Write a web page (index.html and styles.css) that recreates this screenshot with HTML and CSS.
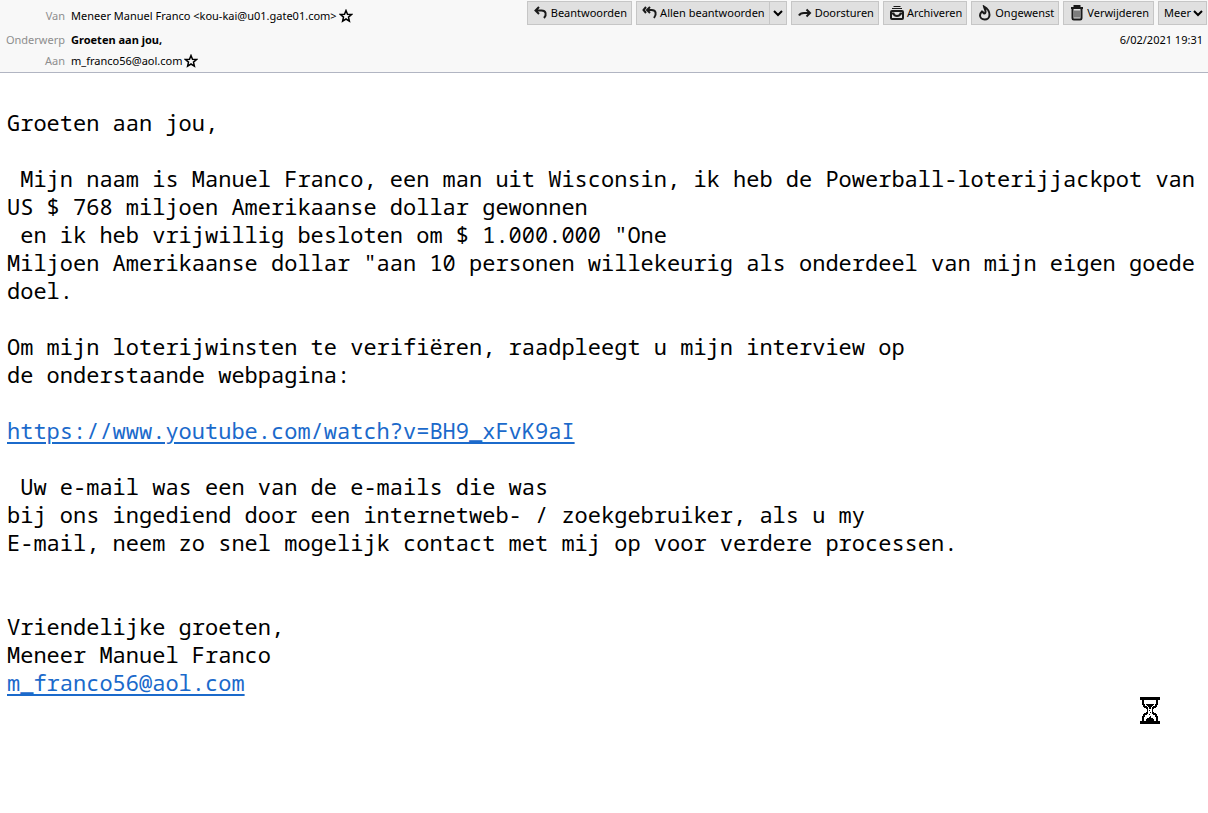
FILE: index.html
```
<!DOCTYPE html>
<html lang="nl">
<head>
    <meta charset="UTF-8">
    <meta name="viewport" content="width=device-width, initial-scale=1.0">
    <title>Groeten aan jou,</title>
    <link rel="stylesheet" href="styles.css">
</head>
<body>
    <header class="message-header">
        <dl class="fields">
            <dt>Van</dt>
            <dd>
                <span>Meneer Manuel Franco &lt;kou-kai@u01.gate01.com&gt;</span>
                <button class="star" aria-label="Contact toevoegen">
                    <svg width="14" height="14" viewBox="0 0 14 14"><path d="M7 1.500l1.500 3.700 4 .3-3 2.600.9 4L7 10l-3.400 2.100.9-4-3-2.600 4-.3z"/></svg>
                </button>
            </dd>
            <dt>Onderwerp</dt>
            <dd class="subject">Groeten aan jou,</dd>
            <dt>Aan</dt>
            <dd>
                <span>m_franco56@aol.com</span>
                <button class="star" aria-label="Contact toevoegen">
                    <svg width="14" height="14" viewBox="0 0 14 14"><path d="M7 1.500l1.500 3.700 4 .3-3 2.600.9 4L7 10l-3.400 2.100.9-4-3-2.600 4-.3z"/></svg>
                </button>
            </dd>
        </dl>

        <div class="side">
            <div class="toolbar">
                <button class="tool">
                    <svg width="16" height="16" viewBox="0 0 16 16"><path d="M6 2L2.500 5.500 6 9M3 5.500h5.500c4.500 0 5.500 4 2.500 7.500"/></svg>
                    Beantwoorden
                </button>
                <div class="split">
                    <button class="tool">
                        <svg width="16" height="16" viewBox="0 0 16 16"><path d="M4 2L1.500 5 4 8M8 2L5 5l3 3M5.500 5H9.500c4.500 0 5.500 4 2.500 8"/></svg>
                        Allen beantwoorden
                    </button>
                    <button class="tool drop" aria-label="Meer antwoordopties">
                        <svg width="10" height="10" viewBox="0 0 10 10"><path d="M1 3l4 4 4-4"/></svg>
                    </button>
                </div>
                <button class="tool">
                    <svg width="16" height="16" viewBox="0 0 16 16"><path d="M2 10.500c1-2 2.500-2.500 5-2.500h6M9.500 4.500L13 8l-3.500 3.500"/></svg>
                    Doorsturen
                </button>
                <button class="tool">
                    <svg width="16" height="16" viewBox="0 0 16 16"><path d="M4.500 1.500h7M3 3.500h10" stroke-width="1"/><path d="M3 6h10a1 1 0 0 1 1 1v6a1 1 0 0 1-1 1H3a1 1 0 0 1-1-1V7a1 1 0 0 1 1-1zM2 8.500h2.500C5 10.300 6.300 11 8 11s3-.7 3.500-2.500H14"/></svg>
                    Archiveren
                </button>
                <button class="tool">
                    <svg width="16" height="16" viewBox="0 0 16 16"><path d="M7 1.500c.5 2.500 1.500 3 1.500 5 0 1.300-.5 2-1.200 2C6.300 8.500 6.200 7 5 6.500 4 7.500 3 8.500 3 10.200c0 2.500 2 4.300 4.700 4.300s4.800-1.900 4.800-4.500c0-3.500-2-6.500-5.500-8.500z"/></svg>
                    Ongewenst
                </button>
                <button class="tool">
                    <svg width="16" height="16" viewBox="0 0 16 16"><path d="M2 3h12M5.500 3V1h5v2M3.500 4v9.200c0 .8.500 1.300 1.300 1.300h6.400c.8 0 1.300-.5 1.300-1.300V4"/><path d="M6 5.500v7M8 5.500v7M10 5.500v7" stroke-width="1"/></svg>
                    Verwijderen
                </button>
                <button class="tool more">
                    Meer
                    <svg width="10" height="10" viewBox="0 0 10 10"><path d="M1 3l4 4 4-4"/></svg>
                </button>
            </div>
            <time class="date" datetime="2021-02-06T19:31">6/02/2021 19:31</time>
        </div>
    </header>

    <main class="message-body">Groeten aan jou,

 Mijn naam is Manuel Franco, een man uit Wisconsin, ik heb de Powerball-loterijjackpot van
US $ 768 miljoen Amerikaanse dollar gewonnen
 en ik heb vrijwillig besloten om $ 1.000.000 "One
Miljoen Amerikaanse dollar "aan 10 personen willekeurig als onderdeel van mijn eigen goede
doel.

Om mijn loterijwinsten te verifiëren, raadpleegt u mijn interview op
de onderstaande webpagina:

<a href="https://www.youtube.com/watch?v=BH9_xFvK9aI">https://www.youtube.com/watch?v=BH9_xFvK9aI</a>

 Uw e-mail was een van de e-mails die was
bij ons ingediend door een internetweb- / zoekgebruiker, als u my
E-mail, neem zo snel mogelijk contact met mij op voor verdere processen.


Vriendelijke groeten,
Meneer Manuel Franco
<a href="mailto:m_franco56@aol.com">m_franco56@aol.com</a></main>

    <!-- wachtcursor -->
    <svg class="hourglass" width="20" height="27" viewBox="0 0 20 27" shape-rendering="crispEdges">
        <path d="M0 0h20v3H0zM0 24h20v3H0zM2 3h2v5H2zM16 3h2v5h-2zM3 7h2v3H3zM15 7h2v3h-2zM4 9h3v2H4zM13 9h3v2h-3zM6 10h2v2H6zM12 10h2v2h-2zM7 12h1v3H7zM12 12h1v3h-1zM6 15h2v2H6zM12 15h2v2h-2zM4 16h3v2H4zM13 16h3v2h-3zM3 17h2v3H3zM15 17h2v3h-2zM2 19h2v5H2zM16 19h2v5h-2z"/>
        <path d="M6 7h8v1H6zM7 8h6v1H7zM8 9h4v1H8zM9 10h2v2H9zM9 13h1v1H9zM10 15h1v1h-1zM9 17h1v1H9zM10 19h1v1h-1zM9 20h2v1H9zM7 21h6v1H7zM6 22h8v2H6z"/>
    </svg>
</body>
</html>
```

FILE: styles.css
```
body {
    margin: 0;
    background: #fff;
    color: #000;
}
button {
    margin: 0;
    font: inherit;
    color: inherit;
    cursor: pointer;
}
svg {
    flex: none;
    fill: none;
    stroke: #1a1a1a;
    stroke-width: 2;
}
.message-header {
    display: flex;
    justify-content: space-between;
    background: #f8f8f8;
    border-bottom: 1px solid #b1b5c2;
    font-family: "Segoe UI", "Noto Sans", sans-serif;
    font-size: 11px;
    line-height: 22px;
    white-space: nowrap;
}
.fields {
    display: grid;
    grid-template-columns: 65px auto;
    grid-template-rows: 27px 24px 21px;
    column-gap: 6px;
    align-items: end;
    margin: 0;
}
.fields dt {
    color: #8e8e8e;
    text-align: right;
}
.fields dd {
    display: flex;
    align-items: center;
    gap: 2px;
    margin: 0;
}
.fields .subject {
    font-weight: bold;
}
.star {
    display: flex;
    padding: 0;
    border: 0;
    background: none;
}
.star svg {
    stroke: #000;
    stroke-width: 1.500;
}
.side {
    display: flex;
    flex-direction: column;
    align-items: flex-end;
    gap: 4px;
}
.toolbar {
    display: flex;
    gap: 4px;
    padding: 1px 1px 0 0;
}
.tool {
    display: flex;
    align-items: center;
    gap: 2px;
    height: 24px;
    padding: 0 4px 0 5px;
    background: #e0e0e0;
    border: 1px solid #c6c6c6;
}
.tool:hover {
    background: #d4d4d4;
}
.split {
    display: flex;
}
.split .drop {
    padding: 0 3px;
    border-left: 0;
}
.split .drop svg,
.more svg {
    stroke: #000;
}
.tool.more {
    padding-right: 3px;
}
.date {
    padding-right: 5px;
}
.message-body {
    padding: 35px 0 24px 7px;
    font-family: Consolas, "Noto Sans Mono", "DejaVu Sans Mono", monospace;
    font-size: 22px;
    line-height: 28px;
    white-space: pre-wrap;
}
.message-body a {
    color: #1b6acb;
    text-decoration-thickness: 2px;
    text-underline-offset: 3px;
}
.hourglass {
    position: fixed;
    right: 48px;
    bottom: 89px;
    fill: #000;
    stroke: none;
}
```
